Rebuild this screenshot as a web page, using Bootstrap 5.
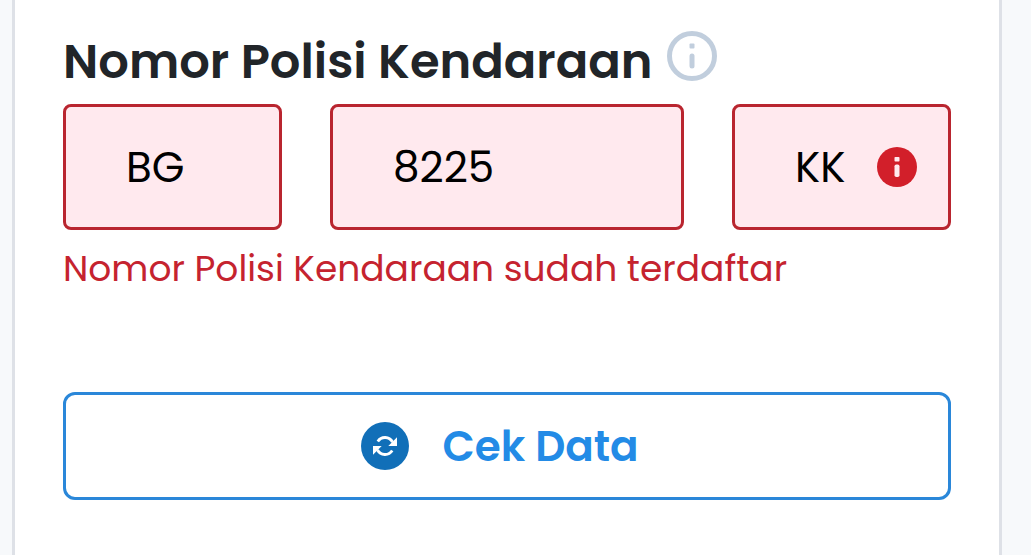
<!DOCTYPE html>
<html lang="id">
<head>
<meta charset="utf-8">
<meta name="viewport" content="width=device-width, initial-scale=1">
<title>Nomor Polisi Kendaraan</title>
<link href="https://cdn.jsdelivr.net/npm/bootstrap@5.3.0/dist/css/bootstrap.min.css" rel="stylesheet">
<style>
  body { background: #f7f9fb; font-family: Poppins, Inter, sans-serif; }
  .panel { margin: 0 29px 0 12px; padding: 28px 48px 48px; background: #fff; border: solid #dee1e7; border-width: 0 3px; }
  .field-head { gap: 14px; }
  .field-title { font-size: 48px; line-height: 68px; font-weight: 600; color: #212529; }
  .info-btn { line-height: 0; margin-top: 3px; }
  .plate-row { display: grid; grid-template-columns: 73fr 118fr 73fr; gap: 48px; margin-top: 8px; }
  .plate-row .form-control { height: 126px; padding: 0 0 0 60px; font-size: 42px; color: #000; background: #ffe9ee; border: 3px solid #b9252f; border-radius: 8px; }
  .alert-mark { right: 34px; }
  .error-text { font-size: 36px; line-height: 54px; color: #c5232f; margin: 12px 0 96px; }
  .btn-check-data { height: 108px; padding: 0 26px 0 12px; gap: 33px; font-size: 42px; font-weight: 600; color: #238be6; background: #fff; border: 3px solid #2a87d9; border-radius: 12px; }
</style>
</head>
<body>
<main class="panel min-vh-100">
  <form>
    <div class="field-head d-flex align-items-start">
      <label class="field-title text-nowrap" for="plate-area">Nomor Polisi Kendaraan</label>
      <button type="button" class="info-btn border-0 bg-transparent p-0" aria-label="Info">
        <svg width="50" height="50" viewBox="0 0 50 50" fill="none">
          <circle cx="25" cy="25" r="22.5" stroke="#c1cedd" stroke-width="5"/>
          <rect x="22.5" y="12.5" width="5" height="5" rx="1" fill="#c1cedd"/>
          <rect x="22.5" y="22.5" width="5" height="15" rx="2.5" fill="#c1cedd"/>
        </svg>
      </button>
    </div>
    <div class="plate-row">
      <input id="plate-area" class="form-control" type="text" value="BG" aria-describedby="plate-error">
      <input class="form-control" type="text" value="8225" aria-label="Nomor" aria-describedby="plate-error">
      <div class="position-relative">
        <input class="form-control" type="text" value="KK" aria-label="Seri" aria-describedby="plate-error">
        <svg class="alert-mark position-absolute top-50 translate-middle-y" width="40" height="40" viewBox="0 0 40 40" aria-hidden="true">
          <circle cx="20" cy="20" r="20" fill="#d21f2a"/>
          <rect x="17.5" y="10" width="5" height="4.5" rx=".8" fill="#ffe9ee"/>
          <rect x="17.5" y="17.5" width="5" height="12.5" rx="1.8" fill="#ffe9ee"/>
        </svg>
      </div>
    </div>
    <p id="plate-error" class="error-text">Nomor Polisi Kendaraan sudah terdaftar</p>
    <button type="button" class="btn btn-check-data w-100 d-flex align-items-center justify-content-center">
      <svg width="48" height="48" viewBox="0 0 48 48" fill="none" aria-hidden="true">
        <circle cx="24" cy="24" r="24" fill="#116fb8"/>
        <path d="M16.8 19.5A8.5 8.5 0 0 1 31.5 20M31.2 28.5A8.5 8.5 0 0 1 16.5 28" stroke="#fff" stroke-width="2.8"/>
        <path d="M36 15.3V24H27.3L31 20.3ZM12 32.7V24H20.7L17 27.7Z" fill="#fff"/>
      </svg>
      <span>Cek Data</span>
    </button>
  </form>
</main>
<script src="https://cdn.jsdelivr.net/npm/bootstrap@5.3.0/dist/js/bootstrap.bundle.min.js"></script>
</body>
</html>
